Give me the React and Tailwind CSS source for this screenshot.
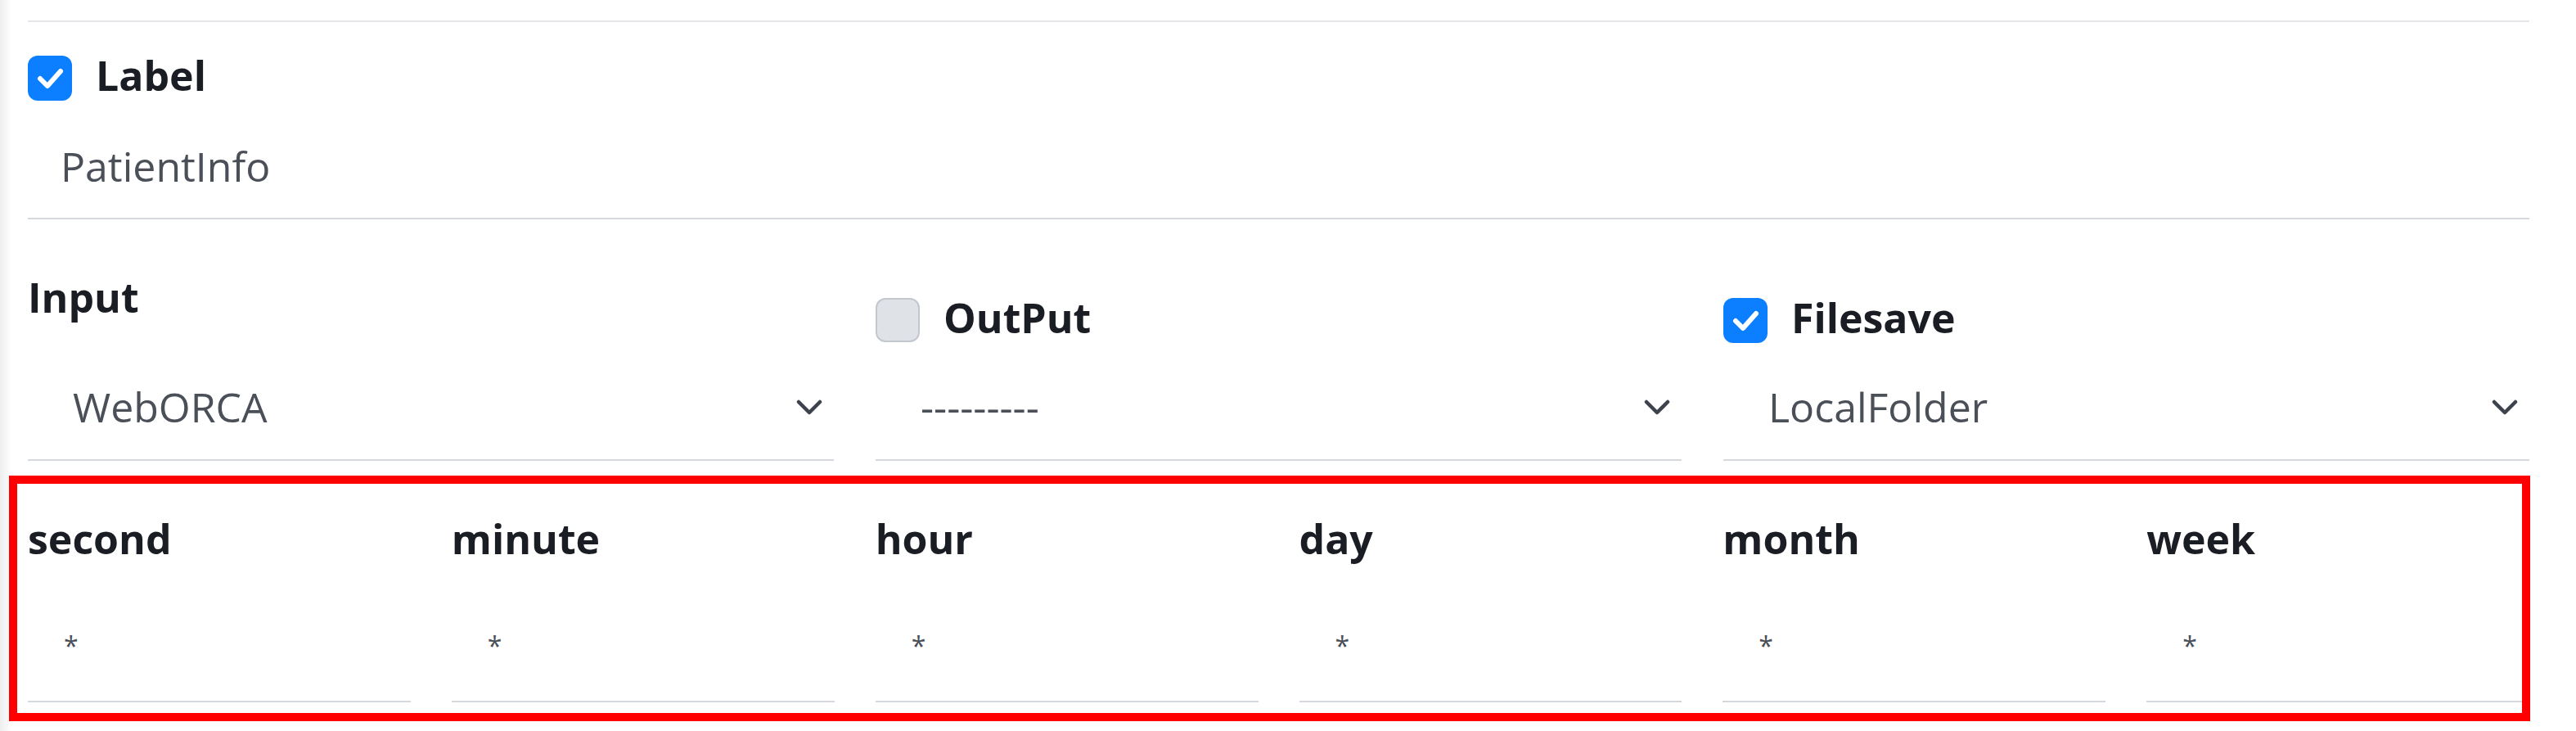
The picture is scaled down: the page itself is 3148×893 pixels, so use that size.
import React from 'react'

const Checkbox = ({ checked }) => {
  if (!checked) {
    return <div className="h-[54px] w-[54px] shrink-0 rounded-[12px] border-2 border-[#c3c8cf] bg-[#dfe2e7]" />
  }
  return (
    <div className="h-[55px] w-[54px] shrink-0 rounded-[12px] bg-[#0b7fff]">
      <svg width="54" height="55" viewBox="0 0 54 55">
        <polyline points="15,28 24,37 40,19" fill="none" stroke="#fff" strokeWidth="6" strokeLinecap="round" strokeLinejoin="round" />
      </svg>
    </div>
  )
}

const Chevron = () => (
  <svg width="32" height="19" viewBox="0 0 32 19" className="shrink-0">
    <polyline points="3,3 16,16 29,3" fill="none" stroke="#3d434c" strokeWidth="4.5" strokeLinecap="round" strokeLinejoin="round" />
  </svg>
)

const Select = ({ value }) => (
  <div className="flex items-center justify-between border-b-2 border-[#d5d9de] pb-[39px] pl-[55px] pr-[14px]">
    <span className="text-[50px] leading-[50px] text-[#4a4f58]">{value}</span>
    <Chevron />
  </div>
)

const CheckLabel = ({ checked, children }) => (
  <div className="flex items-start gap-[29px]">
    <Checkbox checked={checked} />
    <span className="mt-[-1px] text-[50px] font-bold leading-[50px] text-[#1b1d24]">{children}</span>
  </div>
)

const timeFields = ['second', 'minute', 'hour', 'day', 'month', 'week']

export default function App() {
  return (
    <div className="relative flex h-[893px] w-[3148px] overflow-hidden bg-white font-['Open_Sans',sans-serif]">
      <div className="w-[14px] shrink-0 bg-linear-to-r from-[#eeeeee] to-white" />
      <div className="ml-[20px] w-[3057px] shrink-0">
        <div className="h-[25px]" />
        <div className="border-t-2 border-[#e4e6e9]" />
        <div className="mt-[41px]">
          <CheckLabel checked>Label</CheckLabel>
        </div>
        <div className="mt-[55px] pl-[40px] text-[50px] leading-[50px] text-[#4a4f58]">PatientInfo</div>
        <div className="mt-[38px] border-t-2 border-[#d5d9de]" />

        <div className="grid grid-cols-3 gap-x-[51px]">
          <div>
            <div className="h-[204px] pt-[70px]">
              <span className="text-[50px] font-bold leading-[50px] text-[#1b1d24]">Input</span>
            </div>
            <Select value="WebORCA" />
          </div>
          <div>
            <div className="h-[204px] pt-[96px]">
              <CheckLabel checked={false}>OutPut</CheckLabel>
            </div>
            <Select value="---------" />
          </div>
          <div>
            <div className="h-[204px] pt-[96px]">
              <CheckLabel checked>Filesave</CheckLabel>
            </div>
            <Select value="LocalFolder" />
          </div>
        </div>

        <div className="grid grid-cols-6 gap-x-[50px]">
          {timeFields.map((name) => (
            <div key={name} className="pt-[70px]">
              <div className="text-[50px] font-bold leading-[50px] text-[#1b1d24]">{name}</div>
              <div className="mt-[81px] border-b-2 border-[#d5d9de] pb-[42px] pl-[44px] text-[32px] leading-[50px] text-[#4a4f58]">*</div>
            </div>
          ))}
        </div>
      </div>

      <div className="absolute left-[11px] top-[581px] h-[300px] w-[3081px] border-[10px] border-[#ff0000]" />
    </div>
  )
}
